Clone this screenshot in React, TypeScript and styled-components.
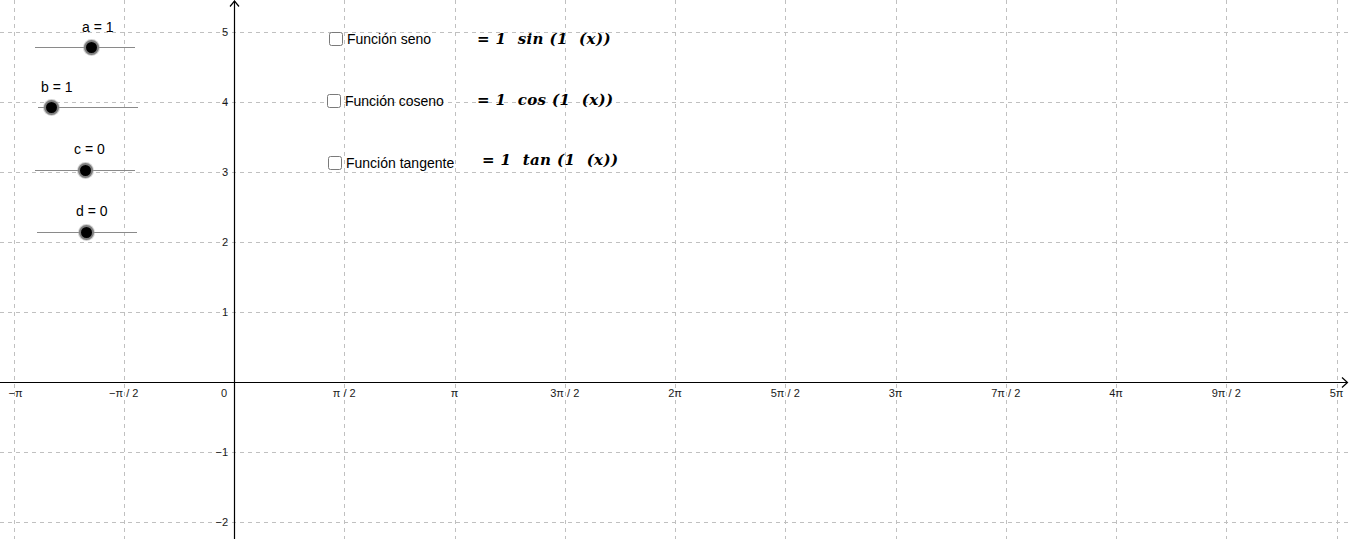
import styled, { createGlobalStyle } from 'styled-components';

const W = 1350;
const H = 539;
const ORIGIN_X = 234;
const ORIGIN_Y = 382;
const STEP_X = 110.25; // one grid step = π/2
const STEP_Y = 70;

const GlobalStyle = createGlobalStyle`
  html, body {
    margin: 0;
    padding: 0;
    background: #ffffff;
    overflow: hidden;
  }
  body {
    font-family: "Liberation Sans", Arial, sans-serif;
  }
`;

const Applet = styled.div`
  position: relative;
  width: ${W}px;
  height: ${H}px;
  background: #ffffff;
  overflow: hidden;
`;

const Board = styled.svg`
  position: absolute;
  inset: 0;
  display: block;
`;

const TickText = styled.text`
  font-family: "Liberation Sans", Arial, sans-serif;
  font-size: 11px;
  fill: #1a1a1a;
`;

const xLabels: Record<number, string> = {
  [-2]: '−π',
  [-1]: '−π / 2',
  1: 'π / 2',
  2: 'π',
  3: '3π / 2',
  4: '2π',
  5: '5π / 2',
  6: '3π',
  7: '7π / 2',
  8: '4π',
  9: '9π / 2',
  10: '5π',
};

const px = (v: number) => Math.round(v) + 0.5;

const Graph = () => {
  const cols = Array.from({ length: 13 }, (_, i) => i - 2);
  const rows = Array.from({ length: 8 }, (_, i) => i - 2);

  return (
    <Board width={W} height={H} viewBox={`0 0 ${W} ${H}`}>
      <g stroke="#c0c0c0" strokeWidth={1} strokeDasharray="4 4">
        {cols.map((k) => (
          <line key={`v${k}`} x1={px(ORIGIN_X + k * STEP_X)} y1={0} x2={px(ORIGIN_X + k * STEP_X)} y2={H} />
        ))}
        {rows.map((j) => (
          <line key={`h${j}`} x1={0} y1={px(ORIGIN_Y - j * STEP_Y)} x2={W} y2={px(ORIGIN_Y - j * STEP_Y)} />
        ))}
      </g>

      <g stroke="#000" strokeWidth={1.2} fill="none">
        <line x1={0} y1={ORIGIN_Y + 0.5} x2={1347} y2={ORIGIN_Y + 0.5} />
        <line x1={ORIGIN_X + 0.5} y1={1} x2={ORIGIN_X + 0.5} y2={H} />
        <polyline points={`${ORIGIN_X - 4},6.5 ${ORIGIN_X + 0.5},1 ${ORIGIN_X + 5},6.5`} />
        <polyline points={`1342,377.5 1347.5,382.5 1342,387.5`} />
      </g>

      {rows
        .filter((j) => j !== 0)
        .map((j) => (
          <TickText key={`yl${j}`} x={228} y={ORIGIN_Y - j * STEP_Y + 4} textAnchor="end">
            {j < 0 ? `−${-j}` : j}
          </TickText>
        ))}

      <TickText x={224} y={397} textAnchor="middle">
        0
      </TickText>
      {cols
        .filter((k) => k !== 0)
        .map((k) => (
          <TickText key={`xl${k}`} x={ORIGIN_X + k * STEP_X + (k === -2 ? 2 : 0)} y={397} textAnchor="middle">
            {xLabels[k]}
          </TickText>
        ))}
    </Board>
  );
};

/* sliders */

const SliderBox = styled.div<{ $x: number; $y: number }>`
  position: absolute;
  left: ${(p) => p.$x}px;
  top: ${(p) => p.$y}px;
  width: 100px;
  height: 0;
`;

const Track = styled.div`
  position: absolute;
  left: 0;
  top: 0;
  width: 100px;
  height: 1px;
  background: #8a8a8a;
`;

const Knob = styled.div<{ $at: number }>`
  position: absolute;
  left: ${(p) => p.$at - 8}px;
  top: -7.5px;
  width: 11px;
  height: 11px;
  border-radius: 50%;
  background: #000;
  border: 2.5px solid #7d7d7d;
  box-shadow: 0 0 0 1px rgba(150, 150, 150, 0.45);
`;

const SliderLabel = styled.span<{ $at: number; $dy: number }>`
  position: absolute;
  left: ${(p) => p.$at}px;
  top: ${(p) => p.$dy}px;
  font-size: 14px;
  line-height: 16px;
  color: #000;
  white-space: nowrap;
`;

interface SliderProps {
  x: number;
  y: number;
  knob: number;
  labelX: number;
  labelY: number;
  label: string;
}

const Slider = ({ x, y, knob, labelX, labelY, label }: SliderProps) => (
  <SliderBox $x={x} $y={y}>
    <Track />
    <SliderLabel $at={labelX - x} $dy={labelY - y - 8}>
      {label}
    </SliderLabel>
    <Knob $at={knob - x} />
  </SliderBox>
);

/* checkboxes */

const CheckRow = styled.label<{ $x: number; $y: number }>`
  position: absolute;
  left: ${(p) => p.$x}px;
  top: ${(p) => p.$y}px;
  display: flex;
  align-items: center;
  gap: 4px;
  font-size: 14px;
  line-height: 16px;
  color: #000;
  white-space: nowrap;
`;

const Box = styled.span`
  box-sizing: border-box;
  width: 14px;
  height: 14px;
  border: 1.5px solid #7a7a7a;
  border-radius: 2.5px;
  background: #fff;
`;

const Formula = styled.div<{ $x: number; $y: number }>`
  position: absolute;
  left: ${(p) => p.$x}px;
  top: ${(p) => p.$y}px;
  font-family: "DejaVu Serif", "Liberation Serif", serif;
  font-style: italic;
  font-weight: 600;
  font-size: 15px;
  line-height: 20px;
  color: #000;
  white-space: pre;
  letter-spacing: 0.4px;
`;

const sliders: SliderProps[] = [
  { x: 35, y: 47, knob: 92, labelX: 82, labelY: 27, label: 'a = 1' },
  { x: 38, y: 107, knob: 52, labelX: 41, labelY: 87, label: 'b = 1' },
  { x: 35, y: 170, knob: 86, labelX: 74, labelY: 149, label: 'c = 0' },
  { x: 37, y: 232, knob: 87, labelX: 76, labelY: 211, label: 'd = 0' },
];

const checks = [
  { x: 329, y: 31, label: 'Función seno', fx: 477, fy: 29, fn: 'sin' },
  { x: 327, y: 93, label: 'Función coseno', fx: 477, fy: 90, fn: 'cos' },
  { x: 328, y: 155, label: 'Función tangente', fx: 482, fy: 150, fn: 'tan' },
];

export default function App() {
  return (
    <>
      <GlobalStyle />
      <Applet>
        <Graph />
        {sliders.map((s) => (
          <Slider key={s.label} {...s} />
        ))}
        {checks.map((c) => (
          <div key={c.label}>
            <CheckRow $x={c.x} $y={c.y}>
              <Box />
              {c.label}
            </CheckRow>
            <Formula $x={c.fx} $y={c.fy}>{`= 1  ${c.fn} (1  (x))`}</Formula>
          </div>
        ))}
      </Applet>
    </>
  );
}
